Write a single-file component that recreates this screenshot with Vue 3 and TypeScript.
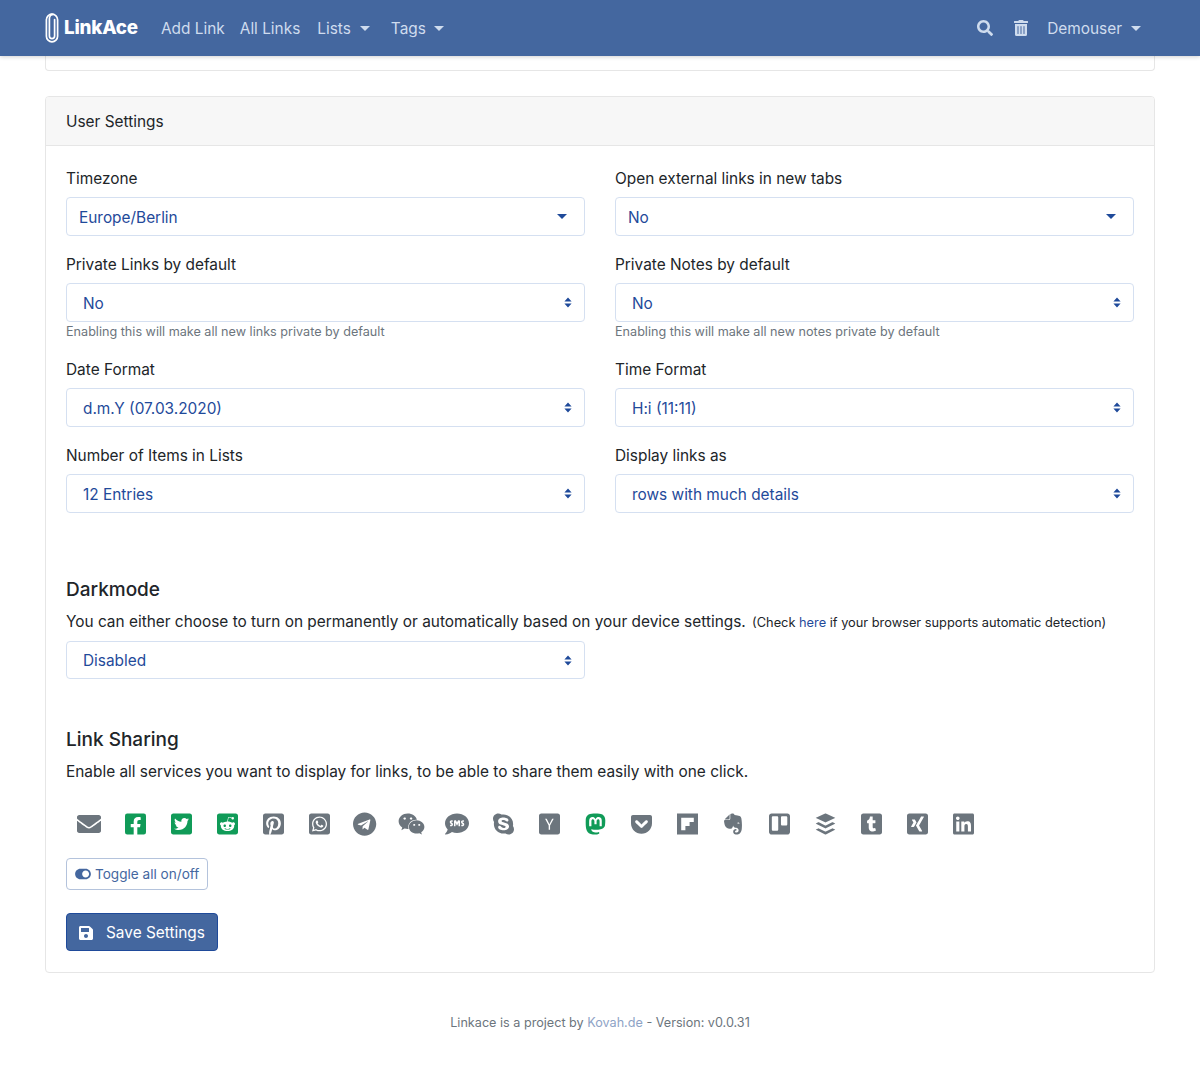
<script setup lang="ts">
interface Field { label: string; value: string; kind: 'single' | 'native'; help?: string }
const rows: Field[][] = [
  [
    { label: 'Timezone', value: 'Europe/Berlin', kind: 'single' },
    { label: 'Open external links in new tabs', value: 'No', kind: 'single' },
  ],
  [
    { label: 'Private Links by default', value: 'No', kind: 'native', help: 'Enabling this will make all new links private by default' },
    { label: 'Private Notes by default', value: 'No', kind: 'native', help: 'Enabling this will make all new notes private by default' },
  ],
  [
    { label: 'Date Format', value: 'd.m.Y (07.03.2020)', kind: 'native' },
    { label: 'Time Format', value: 'H:i (11:11)', kind: 'native' },
  ],
  [
    { label: 'Number of Items in Lists', value: '12 Entries', kind: 'native' },
    { label: 'Display links as', value: 'rows with much details', kind: 'native' },
  ],
]
interface Share { name: string; box: string; d: string; on?: boolean }
const shares: Share[] = [
  { name: 'email', box: '0 0 512 512', d: 'M502.3 190.8c3.9-3.1 9.7-.2 9.7 4.7V400c0 26.5-21.5 48-48 48H48c-26.5 0-48-21.5-48-48V195.6c0-5 5.7-7.8 9.7-4.7 22.4 17.4 52.1 39.5 154.1 113.6 21.1 15.4 56.7 47.8 92.2 47.6 35.7.3 72-32.8 92.3-47.6 102-74.1 131.6-96.3 154-113.7zM256 320c23.2.4 56.6-29.2 73.4-41.4 132.7-96.3 142.8-104.7 173.4-128.7 5.8-4.5 9.2-11.5 9.2-18.9v-19c0-26.5-21.5-48-48-48H48C21.5 64 0 85.5 0 112v19c0 7.4 3.4 14.3 9.2 18.9 30.6 23.9 40.7 32.4 173.4 128.7 16.8 12.2 50.2 41.8 73.4 41.4z' },
  { name: 'facebook', on: true, box: '0 0 448 512', d: 'M400 32H48A48 48 0 0 0 0 80v352a48 48 0 0 0 48 48h137.25V327.69h-63V256h63v-54.64c0-62.15 37-96.48 93.67-96.48 27.14 0 55.52 4.84 55.52 4.84v61h-31.27c-30.81 0-40.42 19.12-40.42 38.73V256h68.78l-11 71.69h-57.78V480H400a48 48 0 0 0 48-48V80a48 48 0 0 0-48-48z' },
  { name: 'twitter', on: true, box: '0 0 448 512', d: 'M400 32H48C21.5 32 0 53.5 0 80v352c0 26.5 21.5 48 48 48h352c26.5 0 48-21.5 48-48V80c0-26.5-21.5-48-48-48zm-48.9 158.8c.2 2.8.2 5.7.2 8.5 0 86.7-66 186.6-186.6 186.6-37.2 0-71.7-10.8-100.7-29.4 5.3.6 10.4.8 15.8.8 30.7 0 58.9-10.4 81.4-28-28.8-.6-53-19.5-61.3-45.5 10.1 1.5 19.2 1.5 29.6-1.2-30-6.1-52.5-32.5-52.5-64.4v-.8c8.7 4.9 18.9 7.9 29.6 8.3a65.447 65.447 0 0 1-29.2-54.6c0-12.2 3.2-23.4 8.9-33.1 32.3 39.8 80.8 65.8 135.2 68.6-9.3-44.5 24-80.6 64-80.6 18.9 0 35.9 7.9 47.9 20.7 14.8-2.8 29-8.3 41.6-15.8-4.9 15.2-15.1 28-28.6 36 13.1-1.4 25.8-5.1 37.6-10.2-8.9 13.1-20.1 24.7-32.9 34z' },
  { name: 'reddit', on: true, box: '0 0 448 512', d: 'M283.2 345.5c2.7 2.7 2.7 6.8 0 9.2-24.5 24.5-93.8 24.6-118.4 0-2.7-2.4-2.7-6.5 0-9.2 2.4-2.4 6.5-2.4 8.9 0 18.7 19.2 81 19.6 100.5 0 2.4-2.3 6.6-2.3 9 0zm-91.3-53.8c0-14.9-11.9-26.8-26.5-26.8-14.9 0-26.8 11.9-26.8 26.8 0 14.6 11.9 26.5 26.8 26.5 14.6 0 26.5-11.9 26.5-26.5zm90.7-26.8c-14.6 0-26.5 11.9-26.5 26.8 0 14.6 11.9 26.5 26.5 26.5 14.9 0 26.8-11.9 26.8-26.5 0-14.9-11.9-26.8-26.8-26.8zM448 80v352c0 26.5-21.5 48-48 48H48c-26.5 0-48-21.5-48-48V80c0-26.5 21.5-48 48-48h352c26.5 0 48 21.5 48 48zm-99.7 140.6c-10.1 0-19 4.2-25.6 10.7-24.1-16.7-56.5-27.4-92.5-28.6l18.7-84.2 59.5 13.4c0 14.6 11.9 26.5 26.5 26.5 14.9 0 26.8-12.2 26.8-26.8 0-14.6-11.9-26.8-26.8-26.8-10.4 0-19.3 6.2-23.8 14.9l-65.7-14.6c-3.3-.9-6.5 1.5-7.4 4.8l-20.5 92.8c-35.7 1.5-67.8 12.2-91.9 28.9-6.5-6.8-15.8-11-25.9-11-37.5 0-49.8 50.4-15.5 67.5-1.2 5.4-1.8 11-1.8 16.7 0 56.5 63.7 102.3 141.9 102.3 78.5 0 142.2-45.8 142.2-102.3 0-5.7-.6-11.6-2.1-17 33.6-17.2 21.2-67.2-16.1-67.2z' },
  { name: 'pinterest', box: '0 0 448 512', d: 'M448 80v352c0 26.5-21.5 48-48 48H154.4c9.8-16.4 22.4-40 27.4-59.3 3-11.5 15.3-58.4 15.3-58.4 8 15.3 31.4 28.2 56.3 28.2 74.1 0 127.4-68.1 127.4-152.7 0-81.1-66.2-141.8-151.4-141.8-106 0-162.2 71.1-162.2 148.6 0 36 19.2 80.8 49.8 95.1 4.7 2.2 7.1 1.2 8.2-3.3.8-3.4 5-20.1 6.8-27.8.6-2.5.3-4.6-1.7-7-10.1-12.3-18.3-34.9-18.3-56 0-54.2 41-106.6 110.9-106.6 60.3 0 102.6 41.1 102.6 99.9 0 66.4-33.5 112.4-77.2 112.4-24.1 0-42.1-19.9-36.4-44.4 6.9-29.2 20.3-60.7 20.3-81.8 0-53-75.5-45.7-75.5 25 0 21.7 7.3 36.5 7.3 36.5-31.4 132.8-36.1 134.5-29.6 192.6l2.2.8H48c-26.5 0-48-21.5-48-48V80c0-26.5 21.5-48 48-48h352c26.5 0 48 21.5 48 48z' },
  { name: 'whatsapp', box: '0 0 448 512', d: 'M224 122.8c-72.7 0-131.8 59.1-131.9 131.8 0 24.9 7 49.2 20.2 70.1l3.1 5-13.3 48.6 49.9-13.1 4.8 2.9c20.2 12 43.4 18.4 67.1 18.4h.1c72.6 0 133.3-59.1 133.3-131.8 0-35.2-15.2-68.3-40.1-93.2-25-25-58-38.7-93.2-38.7zm77.5 188.4c-3.3 9.3-19.1 17.7-26.7 18.8-12.6 1.9-22.4.9-47.5-9.9-39.7-17.2-65.7-57.2-67.7-59.8-2-2.6-16.2-21.5-16.2-41s10.2-29.1 13.9-33.1c3.6-4 7.9-5 10.6-5 2.6 0 5.3 0 7.6.1 2.4.1 5.7-.9 8.9 6.8 3.3 7.9 11.2 27.4 12.2 29.4s1.7 4.3.3 6.9c-7.6 15.2-15.7 14.6-11.6 21.6 15.3 26.3 30.6 35.4 53.9 47.1 4 2 6.3 1.7 8.6-1 2.3-2.6 9.9-11.6 12.5-15.5 2.6-4 5.3-3.3 8.9-2 3.6 1.3 23.1 10.9 27.1 12.9s6.6 3 7.6 4.6c.9 1.9.9 9.9-2.4 19.1zM400 32H48C21.5 32 0 53.5 0 80v352c0 26.5 21.5 48 48 48h352c26.5 0 48-21.5 48-48V80c0-26.5-21.5-48-48-48zM223.9 413.2c-26.6 0-52.7-6.7-75.8-19.3L64 416l22.5-82.2c-13.9-24-21.2-51.3-21.2-79.3C65.4 167.1 136.5 96 223.9 96c42.4 0 82.2 16.5 112.2 46.5 29.9 30 47.9 69.8 47.9 112.2 0 87.4-72.7 158.5-160.1 158.5z' },
  { name: 'telegram', box: '0 0 496 512', d: 'M248 8C111 8 0 119 0 256s111 248 248 248 248-111 248-248S385 8 248 8zm121.8 169.9l-40.7 191.8c-3 13.6-11.1 16.9-22.4 10.5l-62-45.7-29.9 28.8c-3.3 3.3-6.1 6.1-12.5 6.1l4.4-63.1 114.9-103.8c5-4.4-1.1-6.9-7.7-2.5l-142 89.4-61.2-19.1c-13.3-4.2-13.6-13.3 2.8-19.7l239.1-92.2c11.1-4 20.8 2.7 17.2 19.5z' },
  { name: 'wechat', box: '0 0 576 512', d: 'M385.2 167.6c6.4 0 12.6.3 18.8 1.1C387.4 90.3 303.3 32 207.7 32 100.5 32 13 104.8 13 197.4c0 53.4 29.3 97.5 77.9 131.6l-19.3 58.6 68-34.1c24.4 4.8 43.8 9.7 68.2 9.7 6.2 0 12.1-.3 18.3-.8-4-12.9-6.2-26.6-6.2-40.8-.1-84.9 72.9-154 165.3-154zm-104.5-52.9c14.5 0 24.2 9.7 24.2 24.4 0 14.5-9.7 24.2-24.2 24.2-14.8 0-29.3-9.7-29.3-24.2.1-14.7 14.6-24.4 29.3-24.4zm-136.4 48.6c-14.5 0-29.3-9.7-29.3-24.2 0-14.8 14.8-24.4 29.3-24.4 14.8 0 24.4 9.7 24.4 24.4 0 14.6-9.6 24.2-24.4 24.2zM563 319.4c0-77.9-77.9-141.3-165.4-141.3-92.7 0-165.4 63.4-165.4 141.3S305 460.7 397.6 460.7c19.3 0 38.9-5.1 58.6-9.9l53.4 29.3-14.8-48.6C534 402.1 563 363.2 563 319.4zm-219.1-24.5c-9.7 0-19.3-9.7-19.3-19.6 0-9.7 9.7-19.3 19.3-19.3 14.8 0 24.4 9.7 24.4 19.3 0 10-9.7 19.6-24.4 19.6zm107.1 0c-9.7 0-19.3-9.7-19.3-19.6 0-9.7 9.7-19.3 19.3-19.3 14.5 0 24.4 9.7 24.4 19.3.1 10-9.9 19.6-24.4 19.6z' },
  { name: 'sms', box: '0 0 512 512', d: 'M256 32C114.6 32 0 125.1 0 240c0 49.6 21.4 95 57 130.7C44.5 421.1 2.7 466 2.2 466.5c-2.2 2.3-2.8 5.7-1.5 8.7 1.3 3 4.1 4.8 7.3 4.8 66.3 0 116-31.8 140.6-51.4 32.7 12.3 69 19.4 107.4 19.4 141.4 0 256-93.1 256-208S397.4 32 256 32zM128.2 304H116c-4.4 0-8-3.6-8-8v-16c0-4.4 3.6-8 8-8h12.3c6 0 10.4-3.5 10.4-6.6 0-1.3-.8-2.7-2.1-3.8l-21.9-18.8c-8.5-7.2-13.3-17.5-13.3-28.1 0-21.3 19-38.6 42.4-38.6H156c4.4 0 8 3.6 8 8v16c0 4.4-3.6 8-8 8h-12.3c-6 0-10.4 3.5-10.4 6.6 0 1.3.8 2.7 2.1 3.8l21.9 18.8c8.5 7.2 13.3 17.5 13.3 28.1.1 21.3-19 38.6-42.4 38.6zm191.8-8c0 4.4-3.6 8-8 8h-16c-4.4 0-8-3.6-8-8v-68.2l-24.8 55.8c-2.9 5.9-11.4 5.9-14.3 0L224 227.8V296c0 4.4-3.6 8-8 8h-16c-4.4 0-8-3.6-8-8V192c0-8.8 7.2-16 16-16h16c6.1 0 11.6 3.4 14.3 8.8l17.7 35.4 17.7-35.4c2.7-5.4 8.3-8.8 14.3-8.8h16c8.8 0 16 7.2 16 16v104zm48.3 8H356c-4.4 0-8-3.6-8-8v-16c0-4.4 3.6-8 8-8h12.3c6 0 10.4-3.5 10.4-6.6 0-1.3-.8-2.7-2.1-3.8l-21.9-18.8c-8.5-7.2-13.3-17.5-13.3-28.1 0-21.3 19-38.6 42.4-38.6H396c4.4 0 8 3.6 8 8v16c0 4.4-3.6 8-8 8h-12.3c-6 0-10.4 3.5-10.4 6.6 0 1.3.8 2.7 2.1 3.8l21.9 18.8c8.5 7.2 13.3 17.5 13.3 28.1.1 21.3-18.9 38.6-42.3 38.6z' },
  { name: 'skype', box: '0 0 448 512', d: 'M424.7 299.8c2.9-14 4.7-28.9 4.7-43.8 0-113.5-91.9-205.3-205.3-205.3-14.9 0-29.7 1.7-43.8 4.7C161.3 40.7 137.7 32 112 32 50.2 32 0 82.2 0 144c0 25.7 8.7 49.3 23.3 68.2-2.9 14-4.7 28.9-4.7 43.8 0 113.5 91.9 205.3 205.3 205.3 14.9 0 29.7-1.7 43.8-4.7 19 14.6 42.6 23.3 68.2 23.3 61.8 0 112-50.2 112-112 .1-25.6-8.6-49.2-23.2-68.1zm-194.6 91.5c-65.6 0-120.5-29.2-120.5-65 0-16 9-30.6 29.5-30.6 31.2 0 34.1 44.9 88.1 44.9 25.7 0 42.3-11.4 42.3-26.3 0-18.7-16-21.6-42-28-62.5-15.4-117.8-22-117.8-87.2 0-59.2 58.6-81.1 109.1-81.1 55.1 0 110.8 21.9 110.8 55.4 0 16.9-11.4 31.8-30.3 31.8-28.3 0-29.2-33.5-75-33.5-25.7 0-42 7-42 22.5 0 19.8 20.8 21.8 69.1 33 41.4 9.3 90.7 26.8 90.7 77.6 0 59.1-57.1 86.5-112 86.5z' },
  { name: 'hackernews', box: '0 0 448 512', d: 'M400 32H48C21.5 32 0 53.5 0 80v352c0 26.5 21.5 48 48 48h352c26.5 0 48-21.5 48-48V80c0-26.5-21.5-48-48-48zM236 287.5L313.5 142h-32.7L235 233c-4.7 9.3-9 18.3-12.8 26.8L210 233l-45.2-91h-35l76.7 143.8v94.5H236v-92.8z' },
  { name: 'mastodon', on: true, box: '0 0 448 512', d: 'M433 179.11c0-97.2-63.71-125.7-63.71-125.7-62.52-28.7-228.56-28.4-290.48 0 0 0-63.72 28.5-63.72 125.7 0 115.7-6.6 259.4 105.63 289.1 40.51 10.7 75.32 13 103.33 11.4 50.81-2.8 79.32-18.1 79.32-18.1l-1.7-36.9s-36.31 11.4-77.12 10.1c-40.41-1.4-83-4.4-89.63-54a102.54 102.54 0 0 1-.9-13.9c85.63 20.9 158.65 9.1 178.75 6.7 56.12-6.7 105-41.3 111.23-72.9 9.8-49.8 9-121.5 9-121.5zm-75.12 125.2h-46.63v-114.2c0-49.7-64-51.6-64 6.9v62.5h-46.33V197c0-58.5-64-56.6-64-6.9v114.2H90.19c0-122.1-5.2-147.9 18.41-175 25.9-28.9 79.82-30.8 103.83 6.1l11.6 19.5 11.6-19.5c24.11-37.1 78.12-34.8 103.83-6.1 23.71 27.3 18.4 53 18.4 175z' },
  { name: 'pocket', box: '0 0 448 512', d: 'M407.6 64h-367C18.5 64 0 82.5 0 104.6v135.2C0 364.5 99.7 464 224.2 464c124 0 223.8-99.5 223.8-224.2V104.6c0-22.4-17.7-40.6-40.4-40.6zm-162 268.5c-12.4 11.8-31.4 11.1-42.4 0C89.5 223.6 88.3 227.4 88.3 209.3c0-16.9 13.8-30.7 30.7-30.7 17 0 16.1 3.8 105.2 89.3 90.6-86.9 88.6-89.3 105.5-89.3 16.9 0 30.7 13.8 30.7 30.7 0 17.8-2.9 15.7-114.8 123.2z' },
  { name: 'flipboard', box: '0 0 448 512', d: 'M0 32v448h448V32H0zm358.4 179.2h-89.6v89.6h-89.6v89.6H89.6V121.6h268.8v89.6z' },
  { name: 'evernote', box: '0 0 384 512', d: 'M120.82 132.21c1.6 22.31-17.55 21.59-21.61 21.59-68.93 0-73.64-1-83.58 3.34-.56.22-.74 0-.37-.37L123.79 46.45c.38-.37.6-.22.38.37-4.35 9.99-5.77 17.2-3.35 85.39zm79 308c-14.68-37.08 13-76.93 52.52-76.62 17.49 0 22.6 23.21 7.95 31.42-6.19 3.3-24.95 1.74-25.14 19.2-.05 17.09 19.67 25 31.2 24.89A45.64 45.64 0 0 0 312 393.45v-.08c0-11.63-7.79-47.22-47.54-55.34-7.72-1.54-65-6.35-68.35-50.52-3.74 16.93-17.4 63.49-43.11 69.09-8.74 1.94-69.68 7.64-112.92-36.77 0 0-18.57-15.23-28.23-57.95-3.38-15.75-9.28-39.7-11.14-62 0-18 11.14-30.45 25.07-32.2 81 0 90 2.32 101-7.8 9.82-9.24 7.37-15.5 7.37-102.78 1-8.59 7.79-30.81 53.41-24.14 6 .86 31.91 4.18 37.48 30.64l64.26 11.15c20.43 3.71 70.94 7 80.6 57.94 22.66 121.09 8.91 238.46 7.8 238.46C362.15 485.53 267.06 480 267.06 480c-18.95-.23-54.25-9.4-67.27-39.83zm80.94-204.84c-1 1.92-2.2 6 .85 7 14.09 4.93 39.75 6.84 45.88 5.53 3.11-.25 3-4.43 2.48-6.65-3.53-21.85-40.83-26.5-49.24-5.92z' },
  { name: 'trello', box: '0 0 448 512', d: 'M392.3 32H56.1C25.1 32 0 57.1 0 88c-.1 0 0-4 0 336 0 30.9 25.1 56 56 56h336.2c30.8-.2 55.7-25.2 55.7-56V88c.1-30.8-24.8-55.8-55.6-56zM197 371.3c-.2 14.7-12.1 26.6-26.9 26.6H87.4c-14.8.1-26.9-11.8-27-26.6V117.1c0-14.8 12-26.9 26.9-26.9h82.9c14.8 0 26.9 12 26.9 26.9v254.2zm193.1-112c0 14.8-12 26.9-26.9 26.9h-81c-14.8 0-26.9-12-26.9-26.9V117.2c0-14.8 12-26.9 26.8-26.9h81.1c14.8 0 26.9 12 26.9 26.9v142.1z' },
  { name: 'buffer', box: '0 0 448 512', d: 'M427.84 380.67l-196.5 97.82a18.6 18.6 0 0 1-14.67 0L20.16 380.67c-4-2-4-5.28 0-7.29L67.22 350a18.65 18.65 0 0 1 14.69 0l134.76 67a18.51 18.51 0 0 0 14.67 0l134.76-67a18.62 18.62 0 0 1 14.68 0l47.06 23.43c4.05 1.96 4.05 5.24 0 7.24zm0-136.53l-47.06-23.43a18.62 18.62 0 0 0-14.68 0l-134.76 67.08a18.68 18.68 0 0 1-14.67 0L81.91 220.71a18.65 18.65 0 0 0-14.69 0l-47.06 23.43c-4 2-4 5.29 0 7.31l196.51 97.8a18.6 18.6 0 0 0 14.67 0l196.5-97.8c4.05-2.02 4.05-5.3 0-7.31zM20.16 130.42l196.5 90.29a20.08 20.08 0 0 0 14.67 0l196.51-90.29c4-1.86 4-4.89 0-6.74L231.33 33.4a19.88 19.88 0 0 0-14.67 0l-196.5 90.28c-4.05 1.85-4.05 4.88 0 6.74z' },
  { name: 'tumblr', box: '0 0 448 512', d: 'M400 32H48C21.5 32 0 53.5 0 80v352c0 26.5 21.5 48 48 48h352c26.5 0 48-21.5 48-48V80c0-26.5-21.5-48-48-48zm-82.3 364.2c-8.5 9.1-31.2 19.8-60.9 19.8-75.5 0-91.9-55.5-91.9-87.9v-90h-29.7c-3.4 0-6.2-2.8-6.2-6.2v-42.5c0-4.5 2.8-8.5 7.1-10 38.8-13.7 50.9-47.5 52.7-73.2.5-6.9 4.1-10.2 10-10.2h44.3c3.4 0 6.2 2.8 6.2 6.2v72h51.9c3.4 0 6.2 2.8 6.2 6.2v51.1c0 3.4-2.8 6.2-6.2 6.2h-52.1V321c0 21.4 14.8 33.5 42.5 22.4 3-1.2 5.6-2 8-1.4 2.2.5 3.6 2.1 4.6 4.9l13.8 40.2c1 3.2 2 6.7-.3 9.1z' },
  { name: 'xing', box: '0 0 448 512', d: 'M400 32H48C21.5 32 0 53.5 0 80v352c0 26.5 21.5 48 48 48h352c26.5 0 48-21.5 48-48V80c0-26.5-21.5-48-48-48zM140.4 320.2H93.8c-5.5 0-8.7-5.3-6-10.3l49.3-86.7c.1 0 .1-.1 0-.2l-31.4-54c-3-5.6.2-10.1 6-10.1h46.6c5.2 0 9.5 2.9 12.9 8.7l31.9 55.3c-1.3 2.3-18 31.7-50.1 88.2-3.5 6.2-7.7 9.1-12.6 9.1zm219.7-214.1L257.3 286.8v.2l65.5 119c2.8 5.1.1 10.1-6 10.1h-46.6c-5.5 0-9.7-2.9-12.9-8.7l-66-120.3c2.3-4.1 36.8-64.9 103.4-182.3 3.3-5.8 7.4-8.7 12.5-8.7h46.9c5.7-.1 8.8 4.7 6 10z' },
  { name: 'linkedin', box: '0 0 448 512', d: 'M416 32H31.9C14.3 32 0 46.5 0 64.3v383.4C0 465.5 14.3 480 31.9 480H416c17.6 0 32-14.5 32-32.3V64.3c0-17.8-14.4-32.3-32-32.3zM135.4 416H69V202.2h66.5V416zm-33.2-243c-21.3 0-38.5-17.3-38.5-38.5S80.9 96 102.2 96c21.2 0 38.5 17.3 38.5 38.5 0 21.3-17.2 38.5-38.5 38.5zm282.1 243h-66.4V312c0-24.8-.5-56.7-34.5-56.7-34.6 0-39.9 27-39.9 54.9V416h-66.4V202.2h63.7v29.2h.9c8.9-16.8 30.6-34.5 62.9-34.5 67.2 0 79.7 44.3 79.7 101.9V416z' },
]
</script>

<template>
  <div class="page">
    <nav class="nav">
      <div class="brand">
        <svg class="clip" viewBox="0 0 14 30" width="14" height="30" fill="none" stroke="#fff" stroke-width="1.7" stroke-linecap="round">
          <path d="M9.6 6.5v16.6a2.6 2.6 0 0 1-5.2 0V5.6a4.2 4.2 0 0 1 4.2-4.2h-2.6" />
          <rect x="1.4" y="1.2" width="11.2" height="27.6" rx="5.6" />
        </svg>
        <span class="brand-name">LinkAce</span>
      </div>
      <a class="nav-link">Add Link</a>
      <a class="nav-link tight">All Links</a>
      <a class="nav-link lists">Lists<i class="caret wide lists-caret"></i></a>
      <a class="nav-link">Tags<i class="caret wide narrow"></i></a>
      <div class="nav-right">
        <svg class="nav-icon" viewBox="0 0 512 512" width="16" height="16"><path fill="currentColor" d="M505 442.7L405.3 343c-4.5-4.5-10.6-7-17-7H372c27.6-35.3 44-79.7 44-128C416 93.1 322.9 0 208 0S0 93.1 0 208s93.1 208 208 208c48.3 0 92.7-16.4 128-44v16.3c0 6.4 2.5 12.5 7 17l99.7 99.7c9.4 9.4 24.6 9.4 33.9 0l28.3-28.3c9.4-9.4 9.4-24.6.1-34zM208 336c-70.7 0-128-57.2-128-128 0-70.7 57.2-128 128-128 70.7 0 128 57.2 128 128 0 70.7-57.2 128-128 128z" /></svg>
        <svg class="nav-icon trash" viewBox="0 0 448 512" width="14" height="16"><path fill="currentColor" d="M32 464a48 48 0 0 0 48 48h288a48 48 0 0 0 48-48V128H32zm272-256a16 16 0 0 1 32 0v224a16 16 0 0 1-32 0zm-96 0a16 16 0 0 1 32 0v224a16 16 0 0 1-32 0zm-96 0a16 16 0 0 1 32 0v224a16 16 0 0 1-32 0zM432 32H312l-9.4-18.7A24 24 0 0 0 281.1 0H166.8a23.72 23.72 0 0 0-21.4 13.3L136 32H16A16 16 0 0 0 0 48v32a16 16 0 0 0 16 16h416a16 16 0 0 0 16-16V48a16 16 0 0 0-16-16z" /></svg>
        <a class="nav-link user">Demouser<i class="caret wide user-caret"></i></a>
      </div>
    </nav>

    <main class="container">
      <div class="stub"></div>

      <section class="card">
        <header class="card-header">User Settings</header>
        <div class="card-body">
          <div v-for="(row, r) in rows" :key="r" class="row">
            <div v-for="f in row" :key="f.label" class="group">
              <div class="label">{{ f.label }}</div>
              <div class="select" :class="f.kind">
                <span class="value">{{ f.value }}</span>
                <i v-if="f.kind === 'single'" class="sel-caret"></i>
                <svg v-else class="updown" viewBox="0 0 8 11" width="8" height="11"><path fill="currentColor" d="M4 0.6 7.6 4.4H.4zM4 10.4.4 6.6h7.2z" /></svg>
              </div>
              <div v-if="f.help" class="help">{{ f.help }}</div>
            </div>
          </div>

          <h5 class="heading dark-h">Darkmode</h5>
          <p class="para dark-p">You can either choose to turn on permanently or automatically based on your device settings. <small class="para-small">(Check <a class="link">here</a> if your browser supports automatic detection)</small></p>
          <div class="half">
            <div class="select native">
              <span class="value">Disabled</span>
              <svg class="updown" viewBox="0 0 8 11" width="8" height="11"><path fill="currentColor" d="M4 0.6 7.6 4.4H.4zM4 10.4.4 6.6h7.2z" /></svg>
            </div>
          </div>

          <h5 class="heading share-h">Link Sharing</h5>
          <p class="para">Enable all services you want to display for links, to be able to share them easily with one click.</p>

          <div class="shares">
            <div v-for="s in shares" :key="s.name" class="share" :class="{ on: s.on }" :title="s.name">
              <svg :viewBox="s.box" height="24" :width="24 * Number(s.box.split(' ')[2]) / 512"><path fill="currentColor" fill-rule="evenodd" :d="s.d" /></svg>
            </div>
          </div>

          <button class="btn-toggle" type="button">
            <svg viewBox="0 0 576 512" width="16" height="14"><path fill="currentColor" d="M384 64H192C86 64 0 150 0 256s86 192 192 192h192c106 0 192-86 192-192S490 64 384 64zm0 320c-70.8 0-128-57.3-128-128 0-70.8 57.3-128 128-128 70.8 0 128 57.3 128 128 0 70.8-57.3 128-128 128z" /></svg>
            Toggle all on/off
          </button>

          <button class="btn-save" type="button">
            <svg viewBox="0 0 448 512" width="14" height="16"><path fill="currentColor" d="M433.941 129.941l-83.882-83.882A48 48 0 0 0 316.118 32H48C21.49 32 0 53.49 0 80v352c0 26.51 21.49 48 48 48h352c26.51 0 48-21.49 48-48V163.882a48 48 0 0 0-14.059-33.941zM224 416c-35.346 0-64-28.654-64-64 0-35.346 28.654-64 64-64s64 28.654 64 64c0 35.346-28.654 64-64 64zm96-304.52V212c0 6.627-5.373 12-12 12H76c-6.627 0-12-5.373-12-12V108c0-6.627 5.373-12 12-12h228.52c3.183 0 6.235 1.264 8.485 3.515l3.48 3.48A11.996 11.996 0 0 1 320 111.48z" /></svg>
            Save Settings
          </button>
        </div>
      </section>

      <footer class="footer">Linkace is a project by <a class="foot-link">Kovah.de</a> - Version: v0.0.31</footer>
    </main>
  </div>
</template>

<style>
html, body { margin: 0; background: #fff; }
</style>

<style scoped>
.page {
  font-family: Inter, "Liberation Sans", sans-serif;
  font-size: 15.4px;
  line-height: 24px;
  color: #212529;
  min-height: 1080px;
  overflow: hidden;
}
.nav {
  height: 56px;
  box-sizing: border-box;
  background: #44679f;
  padding: 0 45px;
  display: flex;
  align-items: center;
  box-shadow: 0 1px 4px rgba(0, 0, 0, 0.18);
  position: relative;
}
.brand { display: flex; align-items: center; gap: 5px; width: 108px; }
.clip { flex: none; }
.brand-name { color: #fff; font-weight: 800; font-size: 18.8px; letter-spacing: -0.2px; }
.nav-link { display: inline-flex; align-items: center; padding: 2px 8px 0; color: #cfdcee; }
.nav-link.tight { margin-left: -1px; }
.nav-link.lists { margin-left: 1px; }
.caret {
  display: inline-block;
  width: 0;
  height: 0;
  border-left: 5px solid transparent;
  border-right: 5px solid transparent;
  border-top: 5px solid currentColor;
  margin-top: -2px;
}
.caret.wide { margin-left: 10px; margin-right: 5px; }
.caret.lists-caret { margin-left: 9px; }
.caret.narrow { margin-left: 8px; }
.caret.user-caret { margin-left: 9px; margin-right: 6px; }
.nav-right { margin-left: auto; display: flex; align-items: center; }
.nav-icon { color: #cfdcee; display: block; }
.trash { margin-left: 21px; }
.user { margin-left: 11px; }
.container { width: 1110px; margin: 0 auto; }
.stub {
  height: 15px;
  box-sizing: border-box;
  border: 1px solid #e6e6e6;
  border-top: 0;
  border-radius: 0 0 4px 4px;
  margin-bottom: 25px;
}
.card { border: 1px solid #e6e6e6; border-radius: 4px; }
.card-header {
  height: 49px;
  box-sizing: border-box;
  padding: 13px 20px 11px;
  background: #f7f7f7;
  border-bottom: 1px solid #e6e6e6;
  border-radius: 3px 3px 0 0;
}
.card-body { padding: 20px; height: 826px; box-sizing: border-box; }
.row { display: grid; grid-template-columns: 519px 519px; column-gap: 30px; }
.group { margin-bottom: 16px; }
.label { padding-top: 1px; margin-bottom: 6px; }
.select {
  height: 39px;
  box-sizing: border-box;
  border: 1px solid #d5e0f1;
  border-radius: 4px;
  color: #1f4a9a;
  display: flex;
  align-items: center;
  justify-content: space-between;
}
.value { margin-top: 2px; }
.select.single { padding: 0 12px; }
.select.native { padding: 0 12px 0 16px; }
.sel-caret {
  display: block;
  width: 0;
  height: 0;
  border-left: 5px solid transparent;
  border-right: 5px solid transparent;
  border-top: 5px solid currentColor;
  margin-right: 5px;
}
.updown { display: block; }
.help { font-size: 12.64px; line-height: 19px; color: #6c757d; }
.heading { margin: 0; font-size: 19px; line-height: 24px; font-weight: 500; color: #212529; }
.dark-h { margin-top: 49px; }
.share-h { margin-top: 49px; }
.para { margin: 8px 0; white-space: nowrap; }
.dark-p { margin-bottom: 6px; }
.para-small { font-size: 12.8px; margin-left: 2px; }
.link { color: #1f4a9a; }
.half { width: 519px; }
.half .select { height: 38px; }
.shares { display: flex; margin-top: 20px; height: 40px; align-items: center; }
.share { width: 46px; display: flex; justify-content: center; color: #6c757d; }
.share.on { color: #109b58; }
.share svg { display: block; }
.btn-toggle {
  display: flex;
  align-items: center;
  gap: 4px;
  height: 32px;
  margin-top: 14px;
  padding: 0 8px;
  background: #fff;
  border: 1px solid #b4c3dc;
  border-radius: 4px;
  color: #44679f;
  font: inherit;
  font-size: 13.6px;
}
.btn-save {
  display: flex;
  align-items: center;
  gap: 13px;
  height: 38px;
  margin-top: 23px;
  padding: 2px 12px 0;
  background: #44679f;
  border: 1px solid #1f4a9a;
  border-radius: 4px;
  color: #fff;
  font: inherit;
}
.footer { margin-top: 38px; text-align: center; font-size: 12.64px; color: #6c757d; }
.foot-link { color: #8ea3c6; }
</style>
